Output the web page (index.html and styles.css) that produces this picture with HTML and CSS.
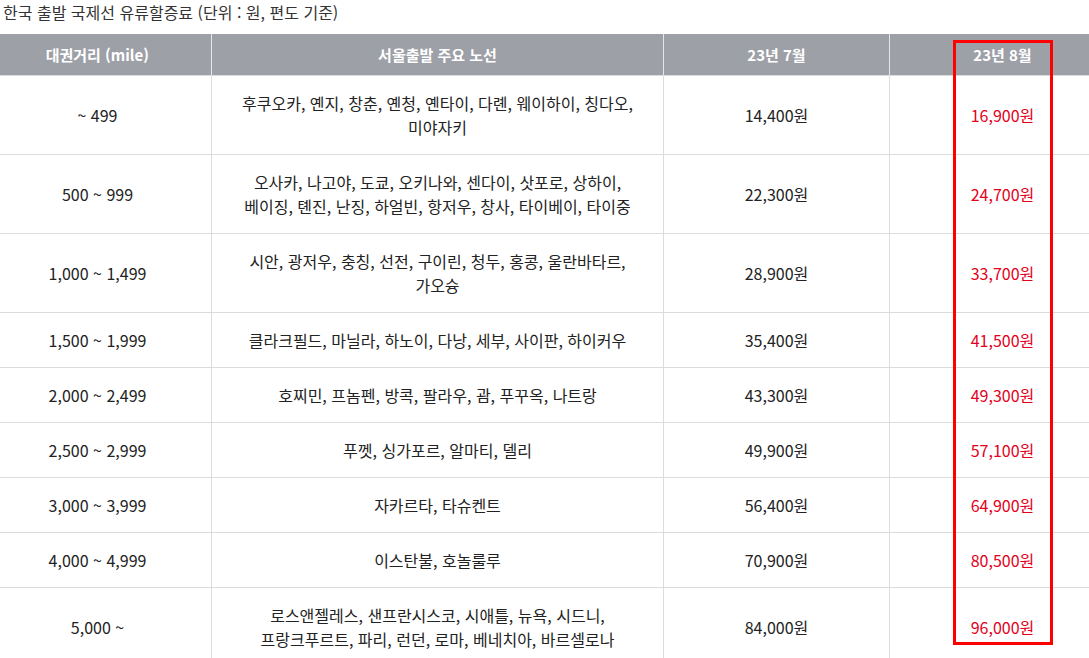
FILE: index.html
```html
<!DOCTYPE html>
<html lang="ko">
<head>
<meta charset="utf-8">
<link rel="stylesheet" href="styles.css">
</head>
<body>
<div class="page">
  <p class="title">한국 출발 국제선 유류할증료 (단위 : 원, 편도 기준)</p>
  <table class="fuel">
    <colgroup>
      <col class="c1"><col class="c2"><col class="c3"><col class="c4">
    </colgroup>
    <thead>
      <tr><th>대권거리 (mile)</th><th>서울출발 주요 노선</th><th>23년 7월</th><th>23년 8월</th></tr>
    </thead>
    <tbody>
      <tr><td>~ 499</td><td>후쿠오카, 옌지, 창춘, 옌청, 옌타이, 다롄, 웨이하이, 칭다오,<br>미야자키</td><td>14,400원</td><td class="red">16,900원</td></tr>
      <tr><td>500 ~ 999</td><td>오사카, 나고야, 도쿄, 오키나와, 센다이, 삿포로, 상하이,<br>베이징, 톈진, 난징, 하얼빈, 항저우, 창사, 타이베이, 타이중</td><td>22,300원</td><td class="red">24,700원</td></tr>
      <tr><td>1,000 ~ 1,499</td><td>시안, 광저우, 충칭, 선전, 구이린, 청두, 홍콩, 울란바타르,<br>가오슝</td><td>28,900원</td><td class="red">33,700원</td></tr>
      <tr><td>1,500 ~ 1,999</td><td>클라크필드, 마닐라, 하노이, 다낭, 세부, 사이판, 하이커우</td><td>35,400원</td><td class="red">41,500원</td></tr>
      <tr><td>2,000 ~ 2,499</td><td>호찌민, 프놈펜, 방콕, 팔라우, 괌, 푸꾸옥, 나트랑</td><td>43,300원</td><td class="red">49,300원</td></tr>
      <tr><td>2,500 ~ 2,999</td><td>푸껫, 싱가포르, 알마티, 델리</td><td>49,900원</td><td class="red">57,100원</td></tr>
      <tr><td>3,000 ~ 3,999</td><td>자카르타, 타슈켄트</td><td>56,400원</td><td class="red">64,900원</td></tr>
      <tr><td>4,000 ~ 4,999</td><td>이스탄불, 호놀룰루</td><td>70,900원</td><td class="red">80,500원</td></tr>
      <tr><td>5,000 ~</td><td>로스앤젤레스, 샌프란시스코, 시애틀, 뉴욕, 시드니,<br>프랑크푸르트, 파리, 런던, 로마, 베네치아, 바르셀로나</td><td>84,000원</td><td class="red">96,000원</td></tr>
    </tbody>
  </table>
  <div class="highlight"></div>
</div>
</body>
</html>
```

FILE: styles.css
```css
html, body {
  margin: 0;
  padding: 0;
  background: #fff;
  overflow: hidden;
}
.page {
  position: relative;
  width: 1089px;
  height: 658px;
  overflow: hidden;
  font-family: "Noto Sans CJK KR", "Noto Sans", sans-serif;
  color: #222;
}
.title {
  margin: 0 0 10px 3px;
  font-size: 16px;
  line-height: 24px;
  color: #333;
}
.fuel {
  border-collapse: collapse;
  table-layout: fixed;
  width: 1132px;
  margin-left: -17px;
  font-size: 16px;
}
.c1 { width: 228px; }
.c2 { width: 452px; }
.c3 { width: 226px; }
.c4 { width: 226px; }
.fuel th {
  background: #9ea0a7;
  color: #fff;
  font-size: 15px;
  font-weight: 700;
  line-height: 24px;
  padding: 9px 10px 8px;
  border-right: 1px solid #e6e6e6;
  text-align: center;
}
.fuel td {
  line-height: 24px;
  padding: 15px 10px;
  border: 1px solid #dcdcdc;
  text-align: center;
  vertical-align: middle;
}
.fuel td.red { color: #e3001b; }
.highlight {
  position: absolute;
  left: 953px;
  top: 40px;
  width: 94px;
  height: 599px;
  border: 3px solid #ff0000;
}
```
